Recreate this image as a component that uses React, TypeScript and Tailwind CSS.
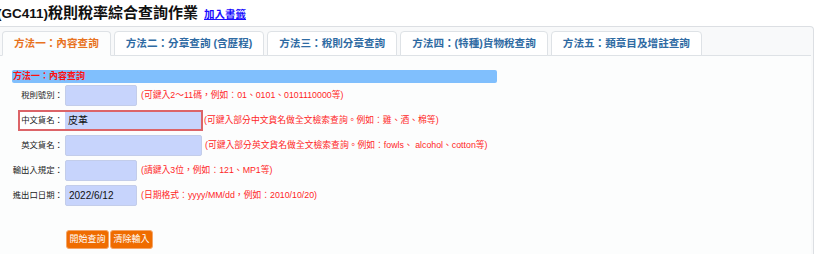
import React from 'react'

const tabs = [
  '方法一：內容查詢',
  '方法二：分章查詢 (含歷程)',
  '方法三：稅則分章查詢',
  '方法四：(特種)貨物稅查詢',
  '方法五：類章目及增註查詢',
]

function Hint({ children, className = '' }: { children: React.ReactNode; className?: string }) {
  return <span className={`whitespace-nowrap text-[8.8px] text-[#ff1f1f] ${className}`}>{children}</span>
}

function Field({ value = '', w }: { value?: string; w: string }) {
  return (
    <div className={`flex h-[21px] items-center rounded-[2px] border border-[#c3cdea] bg-[#c7d4fc] px-[3px] text-[10px] text-[#111] ${w}`}>
      {value}
    </div>
  )
}

function Label({ children }: { children: React.ReactNode }) {
  return (
    <div className="flex w-[53px] shrink-0 justify-end whitespace-nowrap pr-[2px] text-[8.4px] text-[#222]">
      {children}
    </div>
  )
}

export default function App() {
  return (
    <div className="h-[265px] w-[817px] overflow-hidden bg-white font-['Liberation_Sans','Noto_Sans_CJK_TC',sans-serif]">
      <div className="ml-[-3px] flex h-[26px] items-baseline gap-[6px] pt-[4px]">
        <h1 className="whitespace-nowrap text-[15px] font-bold leading-[18px] text-[#111]">
          <span className="text-[13.5px]">(GC411)</span>稅則稅率綜合查詢作業
        </h1>
        <a href="#" className="text-[10.5px] font-semibold text-[#1a0dff] underline">加入書籤</a>
      </div>

      <div className="ml-[-2px] mr-[3px] h-[228px] rounded-tr-[4px] border-t border-r border-l border-[#dcdfe3] bg-[#f8f9fa]">
        <div className="mr-[2px] flex gap-[3px] border-b border-[#dee2e6] pt-[4px] pl-[3px]">
          {tabs.map((t, i) => (
            <div
              key={t}
              className={`mb-[-1px] flex h-[25px] items-center whitespace-nowrap rounded-t-[4px] border border-[#dee2e6] px-[11px] text-[10.6px] font-semibold ${
                i === 0 ? 'border-b-[#fcfdfd] bg-[#fcfdfd] text-[#e8731f]' : 'bg-white text-[#2f6ba3]'
              }`}
            >
              {t}
            </div>
          ))}
        </div>

        <div className="mr-[2px] h-[198px] bg-[#fcfdfd] pt-[14px] pl-[13px]">
          <div className="flex h-[13px] w-[485px] items-center rounded-[2px] bg-[#80bffd] pl-[1px] text-[9px] font-bold text-[#ff1010]">
            方法一：內容查詢
          </div>

          <div className="mt-[2px] flex flex-col gap-[4px]">
            <div className="flex items-center">
              <Label>稅則號別：</Label>
              <Field w="w-[72px]" />
              <Hint className="ml-[4px]">(可鍵入2～11碼，例如：01、0101、0101110000等)</Hint>
            </div>

            <div className="flex items-center">
              <div className="ml-[6px] flex h-[21px] items-center border-2 border-[#dc6468]">
                <div className="flex h-full w-[45px] items-center justify-end whitespace-nowrap bg-white pr-[2px] text-[8.4px] text-[#222]">
                  中文貨名：
                </div>
                <div className="flex h-full w-[136px] items-center bg-[#c7d4fc] px-[3px] text-[10px] text-[#111]">皮革</div>
              </div>
              <Hint className="ml-[1px]">(可鍵入部分中文貨名做全文檢索查詢。例如：雞、酒、棉等)</Hint>
            </div>

            <div className="flex items-center">
              <Label>英文貨名：</Label>
              <Field w="w-[137px]" />
              <Hint className="ml-[3px]">(可鍵入部分英文貨名做全文檢索查詢。例如：fowls、 alcohol、cotton等)</Hint>
            </div>

            <div className="flex items-center">
              <Label>輸出入規定：</Label>
              <Field w="w-[72px]" />
              <Hint className="ml-[4px]">(請鍵入3位，例如：121、MP1等)</Hint>
            </div>

            <div className="flex items-center">
              <Label>進出口日期：</Label>
              <Field w="w-[72px]" value="2022/6/12" />
              <Hint className="ml-[4px]">(日期格式：yyyy/MM/dd，例如：2010/10/20)</Hint>
            </div>
          </div>

          <div className="mt-[24px] ml-[54px] flex gap-[1px]">
            <button className="h-[19px] w-[43px] rounded-[3px] border border-[#f4a66a] bg-[#ef6c00] text-[9px] text-white">開始查詢</button>
            <button className="h-[19px] w-[43px] rounded-[3px] border border-[#f4a66a] bg-[#ef6c00] text-[9px] text-white">清除輸入</button>
          </div>
        </div>
      </div>
    </div>
  )
}
